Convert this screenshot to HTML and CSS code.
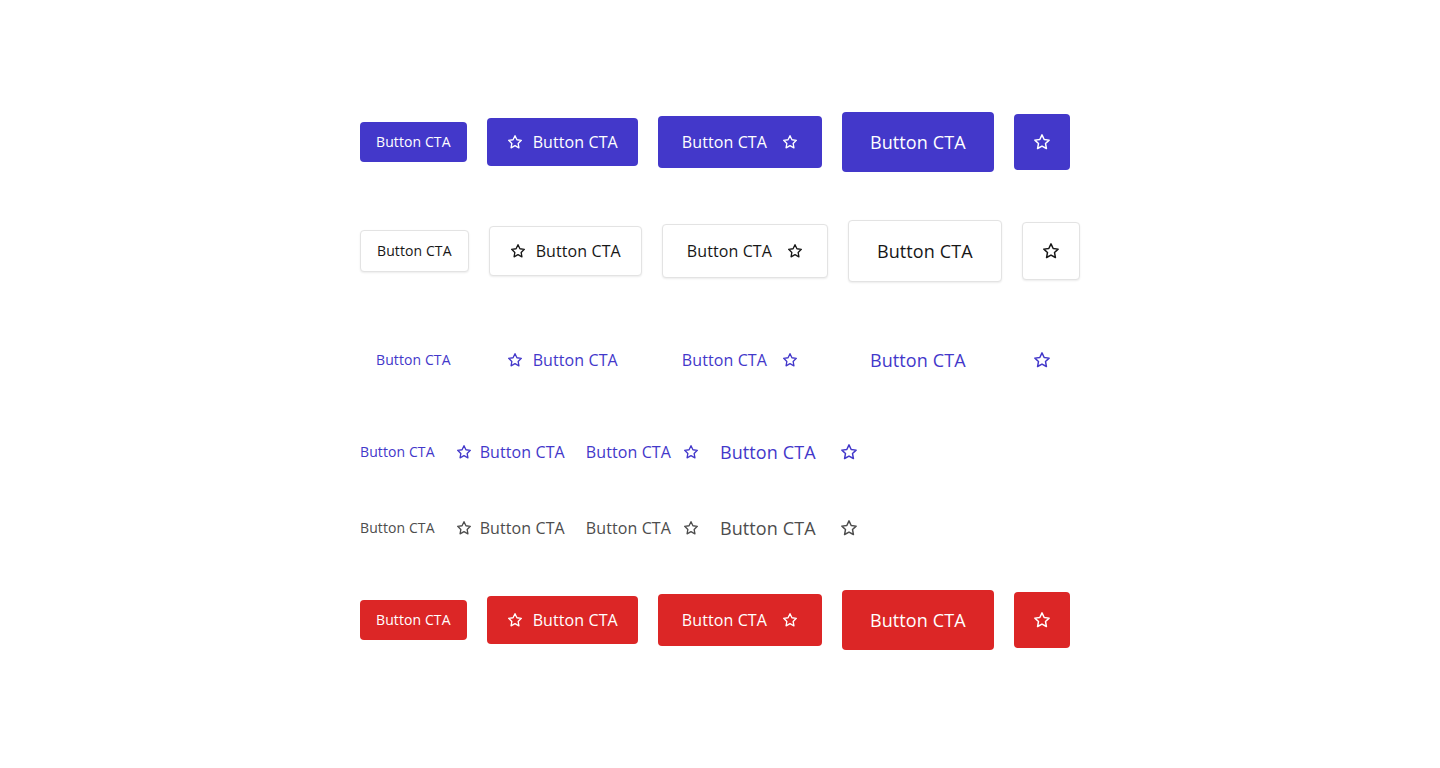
FILE: index.html
```html
<!DOCTYPE html>
<html lang="en">
<head>
  <meta charset="UTF-8">
  <title>Buttons</title>
  <link rel="stylesheet" href="styles.css">
</head>
<body>
  <svg width="0" height="0" style="position:absolute">
    <symbol id="star" viewBox="0 0 24 24">
      <polygon points="12 2.5 14.9 8.6 21.5 9.5 16.7 14.1 17.9 20.7 12 17.5 6.1 20.7 7.3 14.1 2.5 9.5 9.1 8.6" fill="none" stroke="currentColor" stroke-width="2" stroke-linejoin="round"/>
    </symbol>
  </svg>

  <div class="board">

    <!-- primary -->
    <div class="row">
      <button class="btn primary sm">Button CTA</button>
      <button class="btn primary md-left"><svg class="ico"><use href="#star"/></svg>Button CTA</button>
      <button class="btn primary md-right">Button CTA<svg class="ico"><use href="#star"/></svg></button>
      <button class="btn primary lg">Button CTA</button>
      <button class="btn primary icon"><svg class="ico big"><use href="#star"/></svg></button>
    </div>

    <!-- secondary -->
    <div class="row">
      <button class="btn secondary sm">Button CTA</button>
      <button class="btn secondary md-left"><svg class="ico"><use href="#star"/></svg>Button CTA</button>
      <button class="btn secondary md-right">Button CTA<svg class="ico"><use href="#star"/></svg></button>
      <button class="btn secondary lg">Button CTA</button>
      <button class="btn secondary icon"><svg class="ico big"><use href="#star"/></svg></button>
    </div>

    <!-- tertiary -->
    <div class="row">
      <button class="btn tertiary sm">Button CTA</button>
      <button class="btn tertiary md-left"><svg class="ico"><use href="#star"/></svg>Button CTA</button>
      <button class="btn tertiary md-right">Button CTA<svg class="ico"><use href="#star"/></svg></button>
      <button class="btn tertiary lg">Button CTA</button>
      <button class="btn tertiary icon"><svg class="ico big"><use href="#star"/></svg></button>
    </div>

    <!-- link -->
    <div class="row links">
      <a class="link sm">Button CTA</a>
      <a class="link md-left"><svg class="ico"><use href="#star"/></svg>Button CTA</a>
      <a class="link md-right">Button CTA<svg class="ico"><use href="#star"/></svg></a>
      <a class="link lg">Button CTA</a>
      <a class="link icon"><svg class="ico big"><use href="#star"/></svg></a>
    </div>

    <!-- link neutral -->
    <div class="row links">
      <a class="link neutral sm">Button CTA</a>
      <a class="link neutral md-left"><svg class="ico"><use href="#star"/></svg>Button CTA</a>
      <a class="link neutral md-right">Button CTA<svg class="ico"><use href="#star"/></svg></a>
      <a class="link neutral lg">Button CTA</a>
      <a class="link neutral icon"><svg class="ico big"><use href="#star"/></svg></a>
    </div>

    <!-- danger -->
    <div class="row">
      <button class="btn danger sm">Button CTA</button>
      <button class="btn danger md-left"><svg class="ico"><use href="#star"/></svg>Button CTA</button>
      <button class="btn danger md-right">Button CTA<svg class="ico"><use href="#star"/></svg></button>
      <button class="btn danger lg">Button CTA</button>
      <button class="btn danger icon"><svg class="ico big"><use href="#star"/></svg></button>
    </div>

  </div>
</body>
</html>
```

FILE: styles.css
```css
body {
  margin: 0;
  background: #fff;
  font-family: "Open Sans", "Noto Sans", Arial, sans-serif;
  letter-spacing: 0.1px;
}
.board {
  display: flex;
  flex-direction: column;
  gap: 48px;
  padding: 112px 0 0 360px;
}
.row {
  display: flex;
  align-items: center;
  gap: 20px;
  min-height: 28px;
}
.ico {
  width: 16px;
  height: 16px;
  flex: none;
}
.ico.big {
  width: 18px;
  height: 18px;
}

.btn {
  display: inline-flex;
  align-items: center;
  font-family: inherit;
  letter-spacing: inherit;
  border: none;
  border-radius: 4px;
  cursor: pointer;
  white-space: nowrap;
  background: none;
}
.btn.sm {
  font-size: 14px;
  line-height: 20px;
  padding: 10px 16px;
}
.btn.md-left {
  font-size: 16px;
  line-height: 24px;
  padding: 12px 20px;
  gap: 10px;
}
.btn.md-right {
  font-size: 16px;
  line-height: 24px;
  padding: 14px 24px;
  gap: 15px;
}
.btn.lg {
  font-size: 18px;
  line-height: 28px;
  padding: 16px 28px;
}
.btn.icon {
  width: 56px;
  height: 56px;
  justify-content: center;
  padding: 0;
}

.primary {
  background: #4338ca;
  color: #fff;
}
.danger {
  background: #dc2626;
  color: #fff;
}
.secondary {
  background: #fff;
  color: #171717;
  border: 1px solid #e3e3e3;
  box-shadow: 0 1px 2px rgba(0,0,0,0.08);
}
.secondary.icon {
  width: 58px;
  height: 58px;
}
.tertiary {
  color: #4338ca;
}

.links {
  gap: 21px;
}
.link {
  display: inline-flex;
  align-items: center;
  color: #4338ca;
  white-space: nowrap;
  cursor: pointer;
}
.link.neutral {
  color: #4d4d4d;
}
.link.sm {
  font-size: 14px;
  line-height: 20px;
}
.link.md-left {
  font-size: 16px;
  line-height: 24px;
  gap: 8px;
}
.link.md-right {
  font-size: 16px;
  line-height: 24px;
  gap: 12px;
}
.link.lg {
  font-size: 18px;
  line-height: 28px;
}
.link.icon {
  margin-left: 3px;
}
```
